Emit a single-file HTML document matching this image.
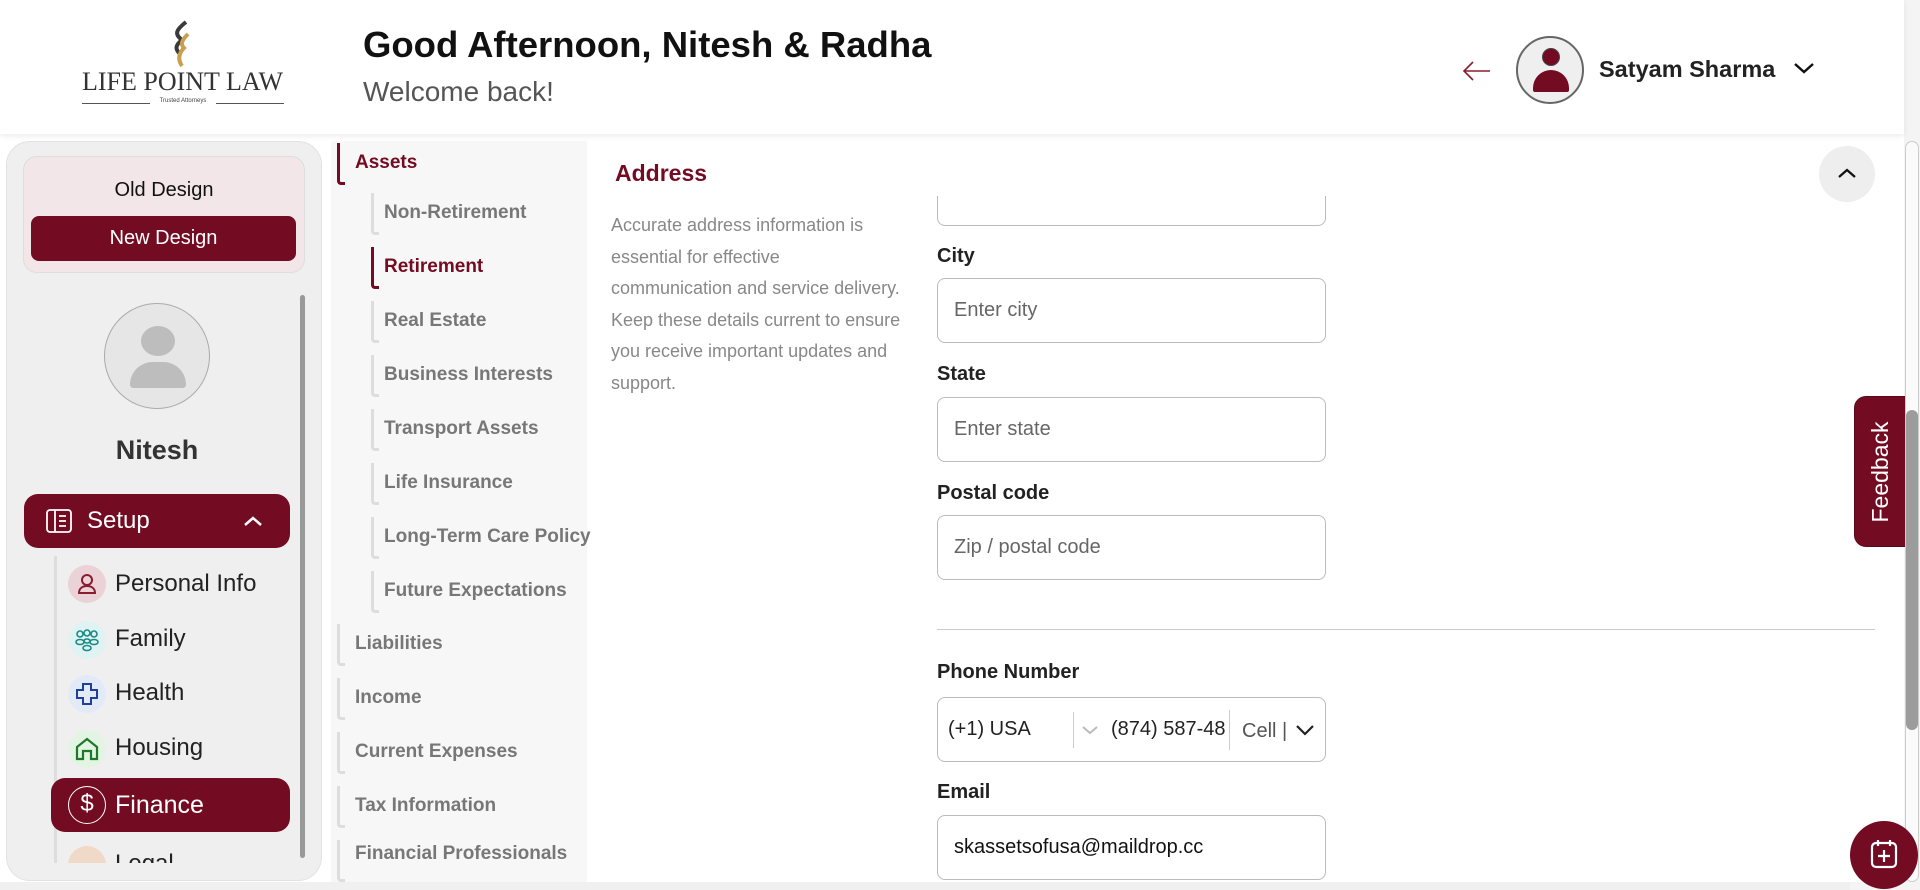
<!DOCTYPE html>
<html><head><meta charset="utf-8">
<style>
*{box-sizing:border-box;margin:0;padding:0}
body{width:1920px;height:890px;overflow:hidden;background:#f4f4f4;font-family:"Liberation Sans",Arial,sans-serif;position:relative}
.abs{position:absolute}
.header{left:0;top:0;width:1904px;height:134px;background:#fff;box-shadow:0 2px 6px rgba(0,0,0,.08);z-index:2}
.main{left:0;top:134px;width:1904px;height:748px;background:#fff}
.side{left:6px;top:141px;width:316px;height:740px;background:#efefef;border:1px solid #e2e2e2;border-radius:24px;overflow:hidden}
.item{position:absolute;left:108px;font-size:24px;color:#222}
.ic{position:absolute;left:61px;width:38px;height:38px;border-radius:50%}
.nav{left:331px;top:141px;width:256px;height:741px;background:#f7f7f7}
.n1{position:absolute;left:24px;font-size:19px;font-weight:bold;color:#777}
.n2{position:absolute;left:53px;font-size:19px;font-weight:bold;color:#777}
.br{position:absolute;width:8px;border-left:3px solid #ddd;border-bottom:3px solid #ddd;border-bottom-left-radius:4px}
.lbl{position:absolute;left:937px;font-size:20px;font-weight:bold;color:#222}
.inp{position:absolute;left:937px;width:389px;height:65px;border:1px solid #bbb;border-radius:8px;background:#fff;font-size:20px;color:#666;padding-left:16px;line-height:63px}
</style></head><body>
<div class="abs header">
  <svg class="abs" style="left:166px;top:20px" width="30" height="50" viewBox="0 0 30 50">
    <path d="M20 2 C10 10 8 14 16 20 C8 26 10 30 14 34" stroke="#3a3a3a" stroke-width="4" fill="none"/>
    <path d="M22 14 C16 20 14 24 18 28 C12 34 12 40 16 46" stroke="#c8a050" stroke-width="4" fill="none"/>
  </svg>
  <div class="abs" style="left:82px;top:67px;font-family:'Liberation Serif',serif;font-size:26px;color:#333">LIFE POINT LAW</div>
  <div class="abs" style="left:82px;top:103px;width:202px;height:1px;background:#555"></div>
  <div class="abs" style="left:150px;top:98px;width:66px;height:10px;background:#fff;font-size:6px;color:#444;text-align:center">Trusted Attorneys</div>
  <div class="abs" style="left:363px;top:24px;font-size:36.5px;font-weight:bold;color:#111">Good Afternoon, Nitesh &amp; Radha</div>
  <div class="abs" style="left:363px;top:76px;font-size:28px;color:#555">Welcome back!</div>
  <svg class="abs" style="left:1462px;top:60px" width="30" height="22" viewBox="0 0 30 22"><path d="M28 11H2M11 2L2 11l9 9" stroke="#8a1c30" stroke-width="1.6" fill="none"/></svg>
  <div class="abs" style="left:1516px;top:36px;width:68px;height:68px;border-radius:50%;border:2px solid #666;background:#efefef;overflow:hidden">
    <div class="abs" style="left:24px;top:10px;width:18px;height:18px;border-radius:50%;background:#730c22;border:1px solid #444"></div>
    <div class="abs" style="left:15px;top:32px;width:36px;height:22px;border-radius:18px 18px 2px 2px;background:#730c22"></div>
  </div>
  <div class="abs" style="left:1599px;top:56px;font-size:23.5px;font-weight:bold;color:#222">Satyam Sharma</div>
  <svg class="abs" style="left:1792px;top:60px" width="24" height="16" viewBox="0 0 24 16"><path d="M3 4l9 8 9-8" stroke="#111" stroke-width="2.5" fill="none"/></svg>
</div>
<div class="abs main"></div>
<div class="abs side">
  <div class="abs" style="left:16px;top:14px;width:282px;height:117px;background:#f2e6e8;border:1px solid #ddd;border-radius:14px">
    <div class="abs" style="left:0;width:100%;top:22px;text-align:center;font-size:20px;color:#111">Old Design</div>
    <div class="abs" style="left:7px;top:59px;width:265px;height:45px;background:#730c22;border-radius:8px;color:#fff;font-size:20px;text-align:center;line-height:45px">New Design</div>
  </div>
  <div class="abs" style="left:97px;top:161px;width:106px;height:106px;border-radius:50%;background:#e6e6e6;border:1px solid #aaa;overflow:hidden">
    <div class="abs" style="left:36px;top:22px;width:34px;height:30px;border-radius:50%;background:#bdbdbd"></div>
    <div class="abs" style="left:25px;top:58px;width:56px;height:26px;border-radius:28px 28px 4px 4px;background:#bdbdbd"></div>
  </div>
  <div class="abs" style="left:0;width:300px;top:293px;text-align:center;font-size:27px;font-weight:bold;color:#333">Nitesh</div>
  <div class="abs" style="left:17px;top:352px;width:266px;height:54px;background:#730c22;border-radius:14px;color:#fff">
    <svg class="abs" style="left:22px;top:15px" width="26" height="24" viewBox="0 0 26 24"><rect x="1" y="1" width="24" height="22" rx="3" stroke="#fff" stroke-width="1.8" fill="none"/><path d="M9 1v22M13 7h7M13 12h7M13 17h7" stroke="#fff" stroke-width="1.8"/></svg>
    <div class="abs" style="left:63px;top:13px;font-size:24px">Setup</div>
    <svg class="abs" style="left:218px;top:20px" width="22" height="14" viewBox="0 0 22 14"><path d="M3 11l8-7 8 7" stroke="#fff" stroke-width="2.5" fill="none"/></svg>
  </div>
  <div class="abs" style="left:47px;top:414px;width:3px;height:330px;background:#ddd"></div>
  <div class="ic" style="top:423px;background:#ead2d6"><svg width="38" height="38" viewBox="0 0 38 38"><circle cx="19" cy="15" r="5" stroke="#8a1c30" stroke-width="2" fill="none"/><path d="M11 28c0-5 4-7 8-7s8 2 8 7z" stroke="#8a1c30" stroke-width="2" fill="none"/></svg></div>
  <div class="item" style="top:428px">Personal Info</div>
  <div class="ic" style="top:479px;background:#dff3f2"><svg width="38" height="38" viewBox="0 0 38 38" fill="none" stroke="#1a8a86" stroke-width="1.6"><circle cx="12" cy="13" r="3"/><circle cx="19" cy="12" r="3"/><circle cx="26" cy="13" r="3"/><ellipse cx="12" cy="21" rx="4" ry="2.5"/><ellipse cx="26" cy="21" rx="4" ry="2.5"/><ellipse cx="19" cy="20" rx="3" ry="2"/><ellipse cx="19" cy="27" rx="4" ry="2.5"/></svg></div>
  <div class="item" style="top:483px">Family</div>
  <div class="ic" style="top:533px;background:#e3eaf7"><svg width="38" height="38" viewBox="0 0 38 38"><path d="M15 9h8v6h6v8h-6v6h-8v-6H9v-8h6z" stroke="#1f3f9c" stroke-width="2" fill="none"/></svg></div>
  <div class="item" style="top:537px">Health</div>
  <div class="ic" style="top:588px;background:#e3f4e3"><svg width="38" height="38" viewBox="0 0 38 38"><path d="M9 29V17l10-8 10 8v12h-6v-8h-8v8z" stroke="#1a7a2a" stroke-width="2.2" fill="none"/></svg></div>
  <div class="item" style="top:592px">Housing</div>
  <div class="abs" style="left:44px;top:636px;width:239px;height:54px;background:#730c22;border-radius:14px"></div>
  <div class="ic" style="top:644px;border:1.8px solid #fff;color:#fff;text-align:center;font-size:24px;line-height:34px">$</div>
  <div class="item" style="top:649px;color:#fff;font-size:25px">Finance</div>
  <div class="ic" style="top:704px;background:#f1d9c8"></div>
  <div class="item" style="top:708px">Legal</div>
  <div class="abs" style="left:0;top:721px;width:316px;height:22px;background:#efefef"></div>
  <div class="abs" style="left:293px;top:153px;width:5px;height:563px;background:#999;border-radius:3px"></div>
</div>
<div class="abs nav">
  <div class="br" style="left:6px;top:2px;height:42px;border-color:#730c22"></div>
  <div class="n1" style="top:11px;color:#730c22">Assets</div>
  <div class="br" style="left:40px;top:52px;height:42px"></div><div class="n2" style="top:61px">Non-Retirement</div>
  <div class="br" style="left:40px;top:106px;height:42px;border-color:#730c22"></div><div class="n2" style="top:115px;color:#730c22">Retirement</div>
  <div class="br" style="left:40px;top:160px;height:42px"></div><div class="n2" style="top:169px">Real Estate</div>
  <div class="br" style="left:40px;top:214px;height:42px"></div><div class="n2" style="top:223px">Business Interests</div>
  <div class="br" style="left:40px;top:268px;height:42px"></div><div class="n2" style="top:277px">Transport Assets</div>
  <div class="br" style="left:40px;top:322px;height:42px"></div><div class="n2" style="top:331px">Life Insurance</div>
  <div class="br" style="left:40px;top:376px;height:42px"></div><div class="n2" style="top:385px;white-space:nowrap">Long-Term Care Policy</div>
  <div class="br" style="left:40px;top:430px;height:42px"></div><div class="n2" style="top:439px">Future Expectations</div>
  <div class="br" style="left:6px;top:483px;height:42px"></div><div class="n1" style="top:492px">Liabilities</div>
  <div class="br" style="left:6px;top:537px;height:42px"></div><div class="n1" style="top:546px">Income</div>
  <div class="br" style="left:6px;top:591px;height:42px"></div><div class="n1" style="top:600px">Current Expenses</div>
  <div class="br" style="left:6px;top:645px;height:42px"></div><div class="n1" style="top:654px">Tax Information</div>
  <div class="br" style="left:6px;top:699px;height:42px"></div><div class="n1" style="top:702px;white-space:nowrap">Financial Professionals</div>
</div>
<div class="abs" style="left:615px;top:160px;font-size:23px;font-weight:bold;color:#730c22">Address</div>
<div class="abs" style="left:611px;top:210px;white-space:nowrap;font-size:18px;line-height:31.5px;color:#888">Accurate address information is<br>essential for effective<br>communication and service delivery.<br>Keep these details current to ensure<br>you receive important updates and<br>support.</div>
<div class="abs" style="left:937px;top:196px;width:389px;height:30px;border:1px solid #bbb;border-top:none;border-radius:0 0 8px 8px;background:#fff"></div>
<div class="lbl" style="top:245px">City</div>
<div class="inp" style="top:278px">Enter city</div>
<div class="lbl" style="top:363px">State</div>
<div class="inp" style="top:397px">Enter state</div>
<div class="lbl" style="top:482px">Postal code</div>
<div class="inp" style="top:515px">Zip / postal code</div>
<div class="abs" style="left:937px;top:629px;width:938px;height:1px;background:#ccc"></div>
<div class="lbl" style="top:661px">Phone Number</div>
<div class="inp" style="top:697px;padding-left:0;color:#222">
  <span class="abs" style="left:10px;top:0">(+1) USA</span>
  <span class="abs" style="left:135px;top:14px;width:1px;height:36px;background:#ccc"></span>
  <svg class="abs" style="left:142px;top:26px" width="20" height="12" viewBox="0 0 20 12"><path d="M3 3l7 6 7-6" stroke="#bbb" stroke-width="2" fill="none"/></svg>
  <span class="abs" style="left:173px;top:0;width:115px;overflow:hidden;white-space:nowrap">(874) 587-4821</span>
  <span class="abs" style="left:291px;top:12px;width:1px;height:40px;background:#ccc"></span>
  <span class="abs" style="left:304px;top:2px;color:#555">Cell |</span>
  <svg class="abs" style="left:356px;top:25px" width="22" height="14" viewBox="0 0 22 14"><path d="M3 3l8 8 8-8" stroke="#222" stroke-width="2.2" fill="none"/></svg>
</div>
<div class="lbl" style="top:781px">Email</div>
<div class="inp" style="top:815px;color:#111">skassetsofusa@maildrop.cc</div>
<div class="abs" style="left:1819px;top:146px;width:56px;height:56px;border-radius:50%;background:#eee"></div>
<svg class="abs" style="left:1836px;top:166px" width="22" height="14" viewBox="0 0 22 14"><path d="M3 11l8-7 8 7" stroke="#111" stroke-width="2.2" fill="none"/></svg>
<div class="abs" style="left:1854px;top:396px;width:52px;height:151px;background:#730c22;border-radius:12px 0 0 12px;border:1px solid #5a0a1a"></div>
<div class="abs" style="left:1805px;top:459px;width:150px;height:26px;transform:rotate(-90deg);color:#fff;font-size:23px;text-align:center;line-height:26px">Feedback</div>
<div class="abs" style="left:1905px;top:141px;width:14px;height:741px;border:1px solid #ccc;border-radius:7px;background:#fafafa"></div>
<div class="abs" style="left:1906px;top:410px;width:12px;height:320px;background:#9c9c9c;border-radius:6px"></div>
<div class="abs" style="left:1850px;top:821px;width:68px;height:68px;border-radius:50%;background:#730c22"></div>
<svg class="abs" style="left:1869px;top:838px" width="30" height="32" viewBox="0 0 30 32"><rect x="3" y="5" width="24" height="24" rx="4" stroke="#fff" stroke-width="2.2" fill="none"/><path d="M9 2v6M21 2v6M15 12v12M9 18h12" stroke="#fff" stroke-width="2.2"/></svg>
<div class="abs" style="left:0;top:882px;width:1850px;height:8px;background:#f0f0f0"></div>
</body></html>
